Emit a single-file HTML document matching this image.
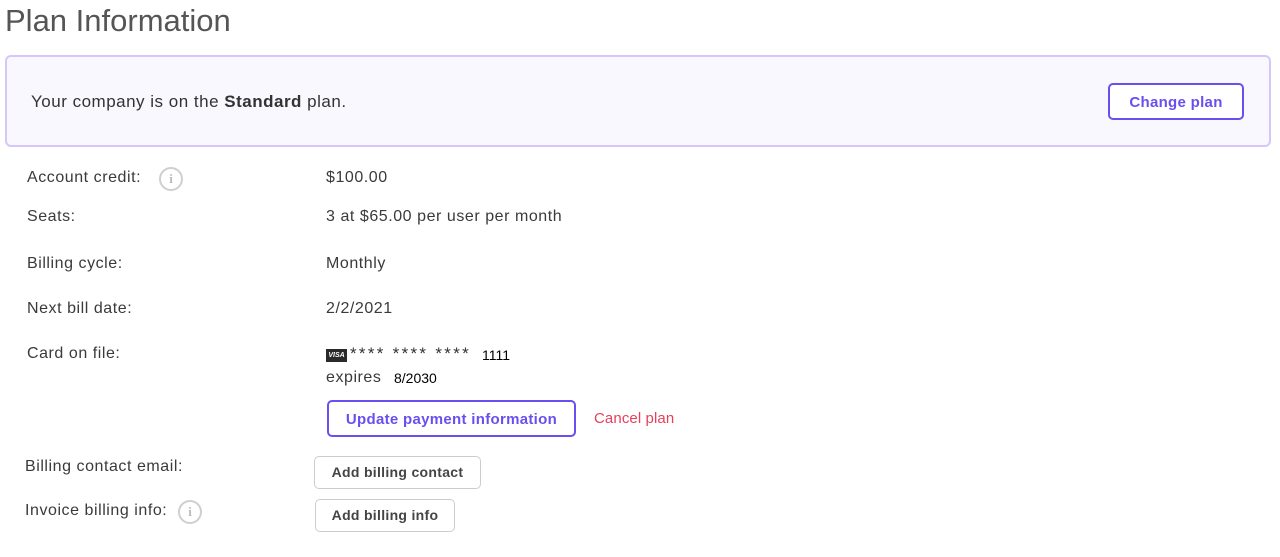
<!DOCTYPE html>
<html><head><style>
body{margin:0;width:1280px;height:557px;background:#fff;font-family:"Liberation Sans",sans-serif;color:#333;position:relative;overflow:hidden}
.a{position:absolute;white-space:nowrap}
.lbl{font-size:16px;color:#3a3a3a;letter-spacing:0.55px}
.btn{position:absolute;box-sizing:border-box;border-radius:5px;font-weight:bold;text-align:center;font-size:14px;letter-spacing:0.3px}
.info{position:absolute;width:24px;height:24px;border:2px solid #cfcfcf;border-radius:50%;box-sizing:border-box;color:#bbb;font:bold 13px "Liberation Serif",serif;text-align:center;line-height:20px}
</style></head><body>
<div class="a" style="left:5px;top:3px;font-size:31px;color:#555;letter-spacing:0px">Plan Information</div>
<div style="position:absolute;left:5px;top:55px;width:1266px;height:92px;box-sizing:border-box;border:2px solid #d6c6fa;border-radius:6px;background:#faf8ff"></div>
<div class="a" style="left:31px;top:92px;font-size:17px;color:#333;letter-spacing:0.5px">Your company is on the <b>Standard</b> plan.</div>
<div class="btn" style="left:1108px;top:83px;width:136px;height:37px;border:2px solid #6a4ff0;color:#6a4ff0;background:#fff;line-height:35px;font-size:15px">Change plan</div>

<div class="a lbl" style="left:27px;top:169px">Account credit:</div>
<div class="info" style="left:159px;top:167px">i</div>
<div class="a lbl" style="left:326px;top:169px">$100.00</div>
<div class="a lbl" style="left:27px;top:208px">Seats:</div>
<div class="a lbl" style="left:326px;top:208px">3 at $65.00 per user per month</div>
<div class="a lbl" style="left:27px;top:255px">Billing cycle:</div>
<div class="a lbl" style="left:326px;top:255px">Monthly</div>
<div class="a lbl" style="left:27px;top:300px">Next bill date:</div>
<div class="a lbl" style="left:326px;top:300px">2/2/2021</div>
<div class="a lbl" style="left:27px;top:345px">Card on file:</div>
<div class="a" style="left:326px;top:349px;width:21px;height:13px;background:#2a2a2a;color:#fff;font:bold italic 7px 'Liberation Sans',sans-serif;line-height:13px;text-align:center">VISA</div>
<div class="a" style="left:350px;top:344px;font-size:17px;color:#333;letter-spacing:2.3px">**** **** ****</div>
<div class="a" style="left:482px;top:347px;font-size:14px;color:#000">1111</div>
<div class="a lbl" style="left:326px;top:369px">expires</div>
<div class="a" style="left:394px;top:370px;font-size:14px;color:#000">8/2030</div>
<div class="btn" style="left:327px;top:400px;width:249px;height:37px;border:2px solid #6a4ff0;color:#6a4ff0;line-height:35px;font-size:15px">Update payment information</div>
<div class="a" style="left:594px;top:410px;font-size:15px;color:#e8405a;letter-spacing:0.1px">Cancel plan</div>

<div class="a lbl" style="left:25px;top:458px">Billing contact email:</div>
<div class="btn" style="left:314px;top:456px;width:167px;height:33px;border:1px solid #ccc;color:#444;line-height:31px">Add billing contact</div>
<div class="a lbl" style="left:25px;top:502px">Invoice billing info:</div>
<div class="info" style="left:178px;top:500px">i</div>
<div class="btn" style="left:315px;top:499px;width:140px;height:33px;border:1px solid #ccc;color:#444;line-height:31px">Add billing info</div>
</body></html>
